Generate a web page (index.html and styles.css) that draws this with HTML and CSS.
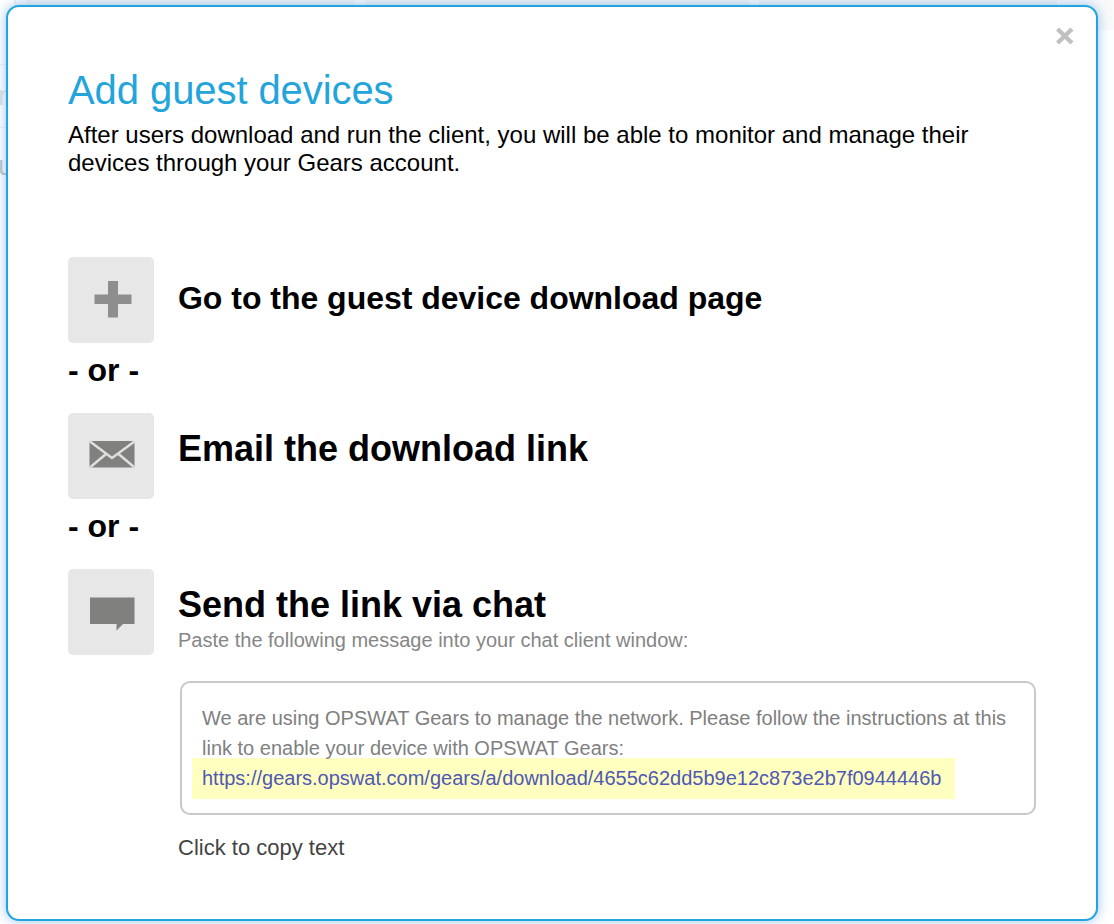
FILE: index.html
```
<!DOCTYPE html>
<html lang="en">
<head>
<meta charset="utf-8">
<title>Add guest devices</title>
<link rel="stylesheet" href="styles.css">
</head>
<body>
<div class="backdrop" aria-hidden="true">
  <div class="tabs"><span class="tab tab-lead"></span><span class="tab tab-first"></span><span class="tab tab-second"></span><span class="tab tab-third"></span></div>
  <div class="rows"><div class="row row-head"></div><div class="row">n</div><div class="row row-dark">u</div></div>
</div>
<main class="dialog" role="dialog" aria-labelledby="dialog-title">
  <button class="close" aria-label="Close">
    <svg width="20" height="20" viewBox="0 0 20 20"><path d="M2.500 3L17 17M17 3L2.500 17"/></svg>
  </button>
  <h1 class="title" id="dialog-title">Add guest devices</h1>
  <p class="intro">After users download and run the client, you will be able to monitor and manage their devices through your Gears account.</p>

  <section class="option">
    <div class="icon">
      <svg width="86" height="86" viewBox="0 0 86 86"><path class="plus" d="M40 24h10v13.500h13.500v9.500H50v13.500H40V47H26.500v-9.500H40z"/></svg>
    </div>
    <h2 class="heading heading-small">Go to the guest device download page</h2>
  </section>
  <p class="or">- or -</p>
  <section class="option">
    <div class="icon">
      <svg width="86" height="86" viewBox="0 0 86 86"><rect class="glyph" x="21.500" y="28" width="45" height="26.500" rx="1.500"/><path class="fold" d="M22 28.500L44 45L66.500 28.500M22.500 54L38 41M66 54L50.500 41"/></svg>
    </div>
    <h2 class="heading">Email the download link</h2>
  </section>
  <p class="or">- or -</p>
  <section class="option">
    <div class="icon">
      <svg width="86" height="86" viewBox="0 0 86 86"><path class="glyph" d="M22 28.500h44.500v26.500H55L48.500 61.500V55H22z"/></svg>
    </div>
    <div class="chat">
      <h2 class="heading">Send the link via chat</h2>
      <p class="hint">Paste the following message into your chat client window:</p>
      <div class="message">
        <p class="message-text">We are using OPSWAT Gears to manage the network. Please follow the instructions at this link to enable your device with OPSWAT Gears:</p>
        <a class="link">https://gears.opswat.com/gears/a/download/4655c62dd5b9e12c873e2b7f0944446b</a>
      </div>
      <p class="copy">Click to copy text</p>
    </div>
  </section>
</main>
</body>
</html>
```
FILE: styles.css
```
* { box-sizing: border-box; }
body {
  margin: 0;
  padding: 5px 0 0 6px;
  height: 924px;
  overflow: hidden;
  background: #fff;
  color: #000;
  font-family: "Liberation Sans", Arial, sans-serif;
}
h1, h2, p { margin: 0; }
svg { display: block; }

.backdrop { position: absolute; inset: 0; overflow: hidden; }
.tabs { display: flex; gap: 10px; height: 30px; margin-left: 14px; background: #f9f9f9; }
.tab { background: #f1f2f3; height: 10px; }
.tab-lead { width: 2px; }
.tab-first { width: 329px; }
.tab-second { width: 384px; }
.tab-third { width: 298px; }
.rows { width: 8px; font-size: 28px; line-height: 62px; color: #e2e2e2; }
.row { height: 63px; border-bottom: 1px solid #f0f0f0; text-indent: -2px; }
.row-head { height: 35px; }
.row-dark { height: 80px; border: 0; line-height: 76px; color: #c6c6c6; }

.dialog {
  position: relative;
  width: 1092px;
  height: 916px;
  padding: 58px 60px 0;
  border: 2px solid #23a5dc;
  border-radius: 13px;
  background: #fff;
  box-shadow: 0 0 12px rgba(85, 155, 230, .6);
}
.close {
  position: absolute;
  top: 19px;
  right: 21px;
  padding: 0;
  border: 0;
  background: none;
}
.close path { fill: none; stroke: #c0c0c0; stroke-width: 4.400; }

.title { padding-top: 1px; font-size: 40px; font-weight: 400; line-height: 48px; letter-spacing: -.08px; color: #23a5dc; }
.intro { margin-top: 7px; width: 920px; font-size: 24px; line-height: 28px; }
.option { display: flex; gap: 24px; }
.intro + .option { margin-top: 80px; }
.icon { flex: none; width: 86px; height: 86px; border-radius: 5px; background: #e7e7e7; }
.plus { fill: #8e8e8e; }
.glyph { fill: #80807e; }
.fold { fill: none; stroke: #dedede; stroke-width: 2.600; }
.heading { margin-top: 15px; font-size: 36px; line-height: 42px; }
.heading-small { margin-top: 21px; font-size: 32px; line-height: 40px; letter-spacing: -.02px; }
.or { height: 70px; padding-top: 8px; font-size: 32px; font-weight: 700; line-height: 38px; }
.hint { margin-top: 2px; font-size: 20px; line-height: 24px; color: #868686; }
.message {
  width: 856px;
  height: 134px;
  margin: 29px 0 0 2px;
  padding: 20px 20px 0;
  border: 2px solid #c9c9c9;
  border-radius: 10px;
  font-size: 20px;
  line-height: 30px;
}
.message-text { color: #808080; }
.link {
  display: block;
  width: 763px;
  height: 41px;
  margin: -5px 0 0 -10px;
  padding: 5px 10px;
  background: #ffffc0;
  color: #4f58b5;
}
.copy { margin-top: 20px; font-size: 22px; line-height: 26px; color: #444; }
```
